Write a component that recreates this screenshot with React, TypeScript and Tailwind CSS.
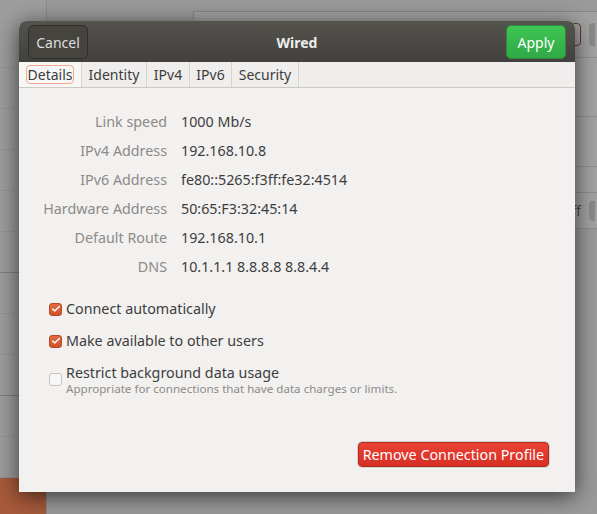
import { Check } from "lucide-react";

const details = [
  ["Link speed", "1000 Mb/s"],
  ["IPv4 Address", "192.168.10.8"],
  ["IPv6 Address", "fe80::5265:f3ff:fe32:4514"],
  ["Hardware Address", "50:65:F3:32:45:14"],
  ["Default Route", "192.168.10.1"],
  ["DNS", "10.1.1.1 8.8.8.8 8.8.4.4"],
];

const tabs = [
  { name: "Details", w: "w-[63px]" },
  { name: "Identity", w: "w-[65px]" },
  { name: "IPv4", w: "w-[43px]" },
  { name: "IPv6", w: "w-[42px]" },
  { name: "Security", w: "w-[67px]" },
];

function Checkbox({ checked }: { checked: boolean }) {
  if (!checked)
    return (
      <span className="block h-[13px] w-[13px] shrink-0 rounded-[3px] border border-[#c9c4bf] bg-[#f7f7f7]" />
    );
  return (
    <span className="grid h-[13px] w-[13px] shrink-0 place-items-center rounded-[3px] border border-[#b84a22] bg-gradient-to-b from-[#e06a3c] to-[#cf5227]">
      <Check size={10} strokeWidth={3.5} className="text-white" />
    </span>
  );
}

function Background() {
  return (
    <div className="flex h-full w-full">
      {/* sidebar list */}
      <div className="flex w-[47px] flex-col border-r border-[#8c8c8c] bg-[#9d9d9d] pt-[27px]">
        {Array.from({ length: 11 }).map((_, i) => (
          <div
            key={i}
            className={
              i === 5 || i === 8
                ? "h-[41px] shrink-0 border-b border-[#7f7f7f]"
                : "h-[41px] shrink-0 border-b border-[#949494]"
            }
          />
        ))}
        <div className="flex-1 bg-[#a75a3b]" />
      </div>
      {/* main area */}
      <div className="flex flex-1 flex-col bg-[#9a9a9a] pl-[146px] pt-[11px]">
        <div className="flex flex-col border-l border-t border-[#868686] bg-[#a2a2a2]">
          <div className="flex h-[46px] items-center justify-end gap-[8px] border-b border-[#8e8e8e] pr-[2px]">
            <span className="h-[23px] w-[20px] rounded-[4px] border border-[#6b3a2c]" />
            <span className="h-[23px] w-[6px] rounded-l-[4px] bg-[#8a8a8a]" />
          </div>
          <div className="h-[59px] border-b border-[#8e8e8e]" />
          <div className="h-[50px] border-b border-[#8e8e8e]" />
          <div className="h-[26px] border-b border-[#8e8e8e]" />
          <div className="flex h-[36px] items-center justify-end gap-[8px] border-b border-[#8e8e8e] pr-[2px] text-[14px] text-[#4d4d4d]">
            <span>ff</span>
            <span className="h-[20px] w-[6px] rounded-l-[4px] bg-[#8a8a8a]" />
          </div>
        </div>
      </div>
    </div>
  );
}

export default function App() {
  return (
    <div
      className="relative h-[514px] w-[597px] overflow-hidden text-[#3d3d3d]"
      style={{ fontFamily: '"Noto Sans", "Open Sans", sans-serif' }}
    >
      <Background />

      {/* dialog */}
      <div className="absolute left-[19px] top-[21px] flex h-[471px] w-[556px] flex-col overflow-hidden rounded-t-[7px] bg-[#f2f1f0] shadow-[0_4px_22px_rgba(0,0,0,0.65)]">
        {/* header bar */}
        <div className="flex h-[41px] shrink-0 items-center justify-between bg-gradient-to-b from-[#55534e] to-[#43413d] px-[9px] pt-[1px]">
          <button className="h-[34px] w-[60px] rounded-[5px] border border-[#2f2e2b] bg-[#46443f] text-[14px] text-[#dedede]">
            Cancel
          </button>
          <div className="text-[14px] font-bold text-[#eeeeec]">Wired</div>
          <button className="h-[34px] w-[60px] rounded-[5px] border border-[#2b8c3c] bg-gradient-to-b from-[#3fc653] to-[#30a846] text-[14px] text-white">
            Apply
          </button>
        </div>

        {/* tabs */}
        <div className="flex h-[26px] shrink-0 border-b border-[#cdc8c3] bg-[#efeeed]">
          {tabs.map((t, i) => (
            <div
              key={t.name}
              className={
                i === 0
                  ? `flex ${t.w} items-center justify-center border-r border-[#d6d2ce] bg-[#f7f7f6]`
                  : `flex ${t.w} items-center justify-center border-r border-[#d6d2ce]`
              }
            >
              <span
                className={
                  i === 0
                    ? "rounded-[4px] border border-[#f2a88b] px-[1px] text-[14px] leading-[17px]"
                    : "px-[1px] text-[14px] leading-[17px]"
                }
              >
                {t.name}
              </span>
            </div>
          ))}
        </div>

        {/* details */}
        <div className="flex flex-col gap-[9px] pt-[24px]">
          {details.map(([label, value]) => (
            <div key={label} className="flex h-[20px] items-center text-[14.3px]">
              <div className="w-[148px] text-right text-[#8d8a87]">{label}</div>
              <div className="pl-[14px] text-[#3d3d3d]">{value}</div>
            </div>
          ))}
        </div>

        {/* checkboxes */}
        <div className="flex flex-col pl-[30px] pt-[22px] text-[14.3px]">
          <label className="flex h-[20px] items-center gap-[4px]">
            <Checkbox checked />
            <span>Connect automatically</span>
          </label>
          <label className="mt-[12px] flex h-[20px] items-center gap-[4px]">
            <Checkbox checked />
            <span>Make available to other users</span>
          </label>
          <label className="mt-[13px] flex items-start gap-[4px]">
            <span className="mt-[9px] flex">
              <Checkbox checked={false} />
            </span>
            <span className="flex flex-col">
              <span className="leading-[18px]">Restrict background data usage</span>
              <span className="text-[11.6px] leading-[13px] text-[#8e8b88]">
                Appropriate for connections that have data charges or limits.
              </span>
            </span>
          </label>
        </div>

        <div className="flex flex-1 items-end justify-end pb-[25px] pr-[26px]">
          <button className="h-[25px] rounded-[4px] border border-[#b2291f] bg-gradient-to-b from-[#ea4135] to-[#d72f24] px-[4px] text-[14.3px] text-white shadow-[0_0_0_1px_rgba(0,0,0,0.12)]">
            Remove Connection Profile
          </button>
        </div>
      </div>
    </div>
  );
}
